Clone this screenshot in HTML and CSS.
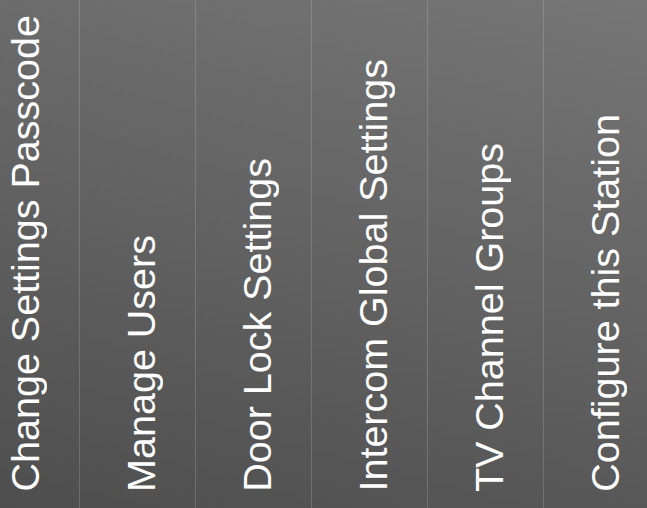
FILE: index.html
```html
<!DOCTYPE html>
<html>
<head>
<meta charset="utf-8">
<link rel="stylesheet" href="styles.css">
</head>
<body>
<div class="strip">
  <div class="tile"><span class="label">Change Settings Passcode</span></div>
  <div class="tile"><span class="label">Manage Users</span></div>
  <div class="tile"><span class="label">Door Lock Settings</span></div>
  <div class="tile"><span class="label">Intercom Global Settings</span></div>
  <div class="tile"><span class="label">TV Channel Groups</span></div>
  <div class="tile"><span class="label">Configure this Station</span></div>
</div>
</body>
</html>
```
FILE: styles.css
```css
html, body {
  margin: 0;
  padding: 0;
  width: 647px;
  height: 508px;
  overflow: hidden;
}
body {
  background: linear-gradient(195deg, #767676 0%, #4e4e4e 100%);
  font-family: "Liberation Sans", Arial, sans-serif;
}
.strip {
  display: flex;
  height: 508px;
  margin-left: -36px;
}
.tile {
  flex: 0 0 77px;
  height: 508px;
  padding-left: 38px;
  border-right: 1px solid rgba(255, 255, 255, 0.16);
  display: flex;
  align-items: flex-end;
}
.label {
  writing-mode: vertical-rl;
  transform: rotate(180deg);
  color: #fff;
  font-size: 39.5px;
  line-height: 46px;
  white-space: nowrap;
  margin-bottom: 16px;
}
```
